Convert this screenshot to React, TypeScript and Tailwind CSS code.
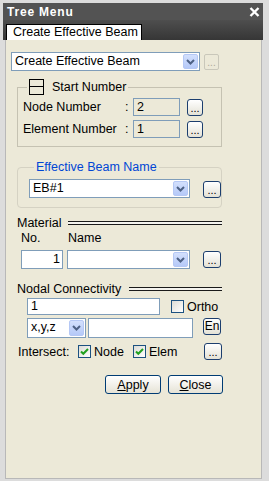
import React from 'react';

// XP-style little widgets used by the tree menu panel

const Chevron = () => (
  <svg width="9" height="6" viewBox="0 0 9 6">
    <path d="M1 1l3.5 3.5L8 1" fill="none" stroke="#4d6185" strokeWidth="2" />
  </svg>
);

const Select = ({ value, className }: { value: string; className: string }) => (
  <div className={`flex border border-[#7f9db9] bg-white ${className}`}>
    <div className="flex-1 pl-[3px] leading-[17px] truncate">{value}</div>
    <div className="m-[1px] flex w-[15px] items-center justify-center rounded-[2px] border border-[#b5c8f5] bg-gradient-to-b from-[#d3e0fd] to-[#b5c9f8]">
      <Chevron />
    </div>
  </div>
);

const DotsButton = ({ className = '', label = '...' }: { className?: string; label?: string }) => (
  <div
    className={`flex items-end justify-center rounded-[3px] border border-[#1c3e6e] bg-gradient-to-b from-white to-[#e4e2d6] text-[11px] leading-[13px] text-black ${className}`}
  >
    {label}
  </div>
);

const XpButton = ({ children, className }: { children: React.ReactNode; className: string }) => (
  <div
    className={`flex items-center justify-center rounded-[3px] border border-[#003c74] bg-gradient-to-b from-white to-[#e6e3d6] ${className}`}
  >
    {children}
  </div>
);

const Check = ({ checked }: { checked: boolean }) => (
  <div className="flex h-[13px] w-[13px] items-center justify-center border border-[#1c5180] bg-gradient-to-br from-[#dcdcd6] to-white">
    {checked && (
      <svg width="9" height="9" viewBox="0 0 9 9">
        <path d="M1 4.5l2.3 2.3L8 2" fill="none" stroke="#21a121" strokeWidth="2" />
      </svg>
    )}
  </div>
);

const DoubleLine = ({ className }: { className: string }) => (
  <div className={`h-[4px] border-y border-[#1a1a1a] bg-[#f4f3ee] ${className}`} />
);

export default function App() {
  return (
    <div className="flex h-[481px] w-[269px] flex-col bg-[#dcdcdc] pt-[3px] pl-[3px] pr-[6px] pb-[2px] font-['Liberation_Sans',Arial,sans-serif] text-[12.5px] leading-[16px] text-black">
      {/* Title */}
      <div className="flex h-[17px] items-center justify-between bg-[#535353] pl-[4px] pr-[3px]">
        <span className="text-[12px] font-bold tracking-[0.8px] text-white">Tree Menu</span>
        <svg width="11" height="10" viewBox="0 0 11 10">
          <path d="M1.5 1l8 8M9.5 1l-8 8" stroke="white" strokeWidth="2.4" />
        </svg>
      </div>

      {/* Tab strip */}
      <div className="flex h-[20px] items-end bg-gradient-to-b from-[#4e4e4e] to-[#363636] pl-[3px]">
        <div className="h-[16px] w-[136px] border border-b-0 border-black bg-white pl-[6px] leading-[15px]">
          Create Effective Beam
        </div>
      </div>

      {/* Panel */}
      <div className="ml-[2px] mr-[1px] flex-1 border-x border-b border-[#b8b8b8] bg-[#ece9d8]">
        <div className="ml-[5px] mt-[12px] flex items-start gap-[4px]">
          <Select value="Create Effective Beam" className="h-[19px] w-[189px]" />
          <div className="mt-[2px] flex h-[16px] w-[15px] items-end justify-center rounded-[2px] border border-[#c9c7ba] text-[10px] leading-[12px] text-[#aca899]">
            ...
          </div>
        </div>

        {/* Start Number */}
        <fieldset className="ml-[11px] mt-[8px] w-[205px] border border-[#c5c2b2] pb-[8px] pl-[5px]">
          <legend className="ml-[4px] px-[2px]">
            <span className="flex items-center">
              <span className="relative h-[16px] w-[15px] border border-black bg-[#ece9d8]">
                <span className="absolute left-0 right-0 top-[6px] h-[1px] bg-black" />
              </span>
              <span className="ml-[8px] leading-[16px]">Start Number</span>
            </span>
          </legend>
          <div className="mt-[3px] flex flex-col gap-[4px]">
            {[
              ['Node Number', '2'],
              ['Element Number', '1'],
            ].map(([label, v]) => (
              <div key={label} className="flex items-center">
                <span className="w-[102px]">{label}</span>
                <span className="w-[8px]">:</span>
                <div className="h-[18px] w-[47px] border border-[#7f9db9] pl-[3px] leading-[16px]">{v}</div>
                <DotsButton className="ml-[7px] h-[17px] w-[16px]" />
              </div>
            ))}
          </div>
        </fieldset>

        {/* Effective Beam Name */}
        <fieldset className="ml-[11px] mt-[12px] w-[205px] rounded-[4px] border border-[#d5d2c3] pb-[9px] pl-[11px]">
          <legend className="ml-[5px] px-[2px] leading-[16px] text-[#0046d5]">Effective Beam Name</legend>
          <div className="mt-[4px] flex items-start">
            <Select value="EB#1" className="h-[19px] w-[161px]" />
            <DotsButton className="ml-[13px] mt-[2px] h-[17px] w-[18px]" />
          </div>
        </fieldset>

        {/* Material */}
        <div className="ml-[11px] mt-[8px] flex w-[205px] items-center leading-[14px]">
          <span>Material</span>
          <DoubleLine className="ml-[7px] flex-1" />
        </div>
        <div className="ml-[15px] mt-[1px] flex leading-[14px]">
          <span className="w-[47px]">No.</span>
          <span>Name</span>
        </div>
        <div className="ml-[15px] mt-[5px] flex items-start">
          <div className="h-[19px] w-[42px] border border-[#7f9db9] bg-white pr-[2px] text-right leading-[17px]">1</div>
          <Select value="" className="ml-[4px] h-[19px] w-[123px]" />
          <DotsButton className="ml-[13px] mt-[1px] h-[17px] w-[18px]" />
        </div>

        {/* Nodal Connectivity */}
        <div className="ml-[11px] mt-[13px] flex w-[205px] items-center leading-[14px]">
          <span>Nodal Connectivity</span>
          <DoubleLine className="ml-[8px] flex-1" />
        </div>
        <div className="ml-[21px] mt-[2px] flex items-center">
          <div className="h-[17px] w-[133px] border border-[#7f9db9] bg-white pl-[3px] leading-[15px]">1</div>
          <div className="ml-[11px]">
            <Check checked={false} />
          </div>
          <span className="ml-[3px]">Ortho</span>
        </div>
        <div className="ml-[21px] mt-[3px] flex items-start">
          <Select value="x,y,z" className="h-[20px] w-[59px]" />
          <div className="ml-[2px] h-[20px] w-[105px] border border-[#7f9db9] bg-white" />
          <DotsButton label="En" className="ml-[10px] h-[17px] w-[18px] !items-center !text-[12px]" />
        </div>
        <div className="ml-[12px] mt-[5px] flex items-center">
          <span className="w-[60px]">Intersect:</span>
          <Check checked />
          <span className="ml-[3px] w-[39px]">Node</span>
          <Check checked />
          <span className="ml-[3px] w-[42px]">Elem</span>
          <DotsButton className="ml-[13px] h-[17px] w-[18px]" />
        </div>

        {/* Footer buttons */}
        <div className="ml-[99px] mt-[15px] flex gap-[7px]">
          <XpButton className="h-[19px] w-[56px]">
            <span>
              <span className="underline">A</span>pply
            </span>
          </XpButton>
          <XpButton className="h-[19px] w-[55px]">
            <span>
              <span className="underline">C</span>lose
            </span>
          </XpButton>
        </div>
      </div>
    </div>
  );
}
